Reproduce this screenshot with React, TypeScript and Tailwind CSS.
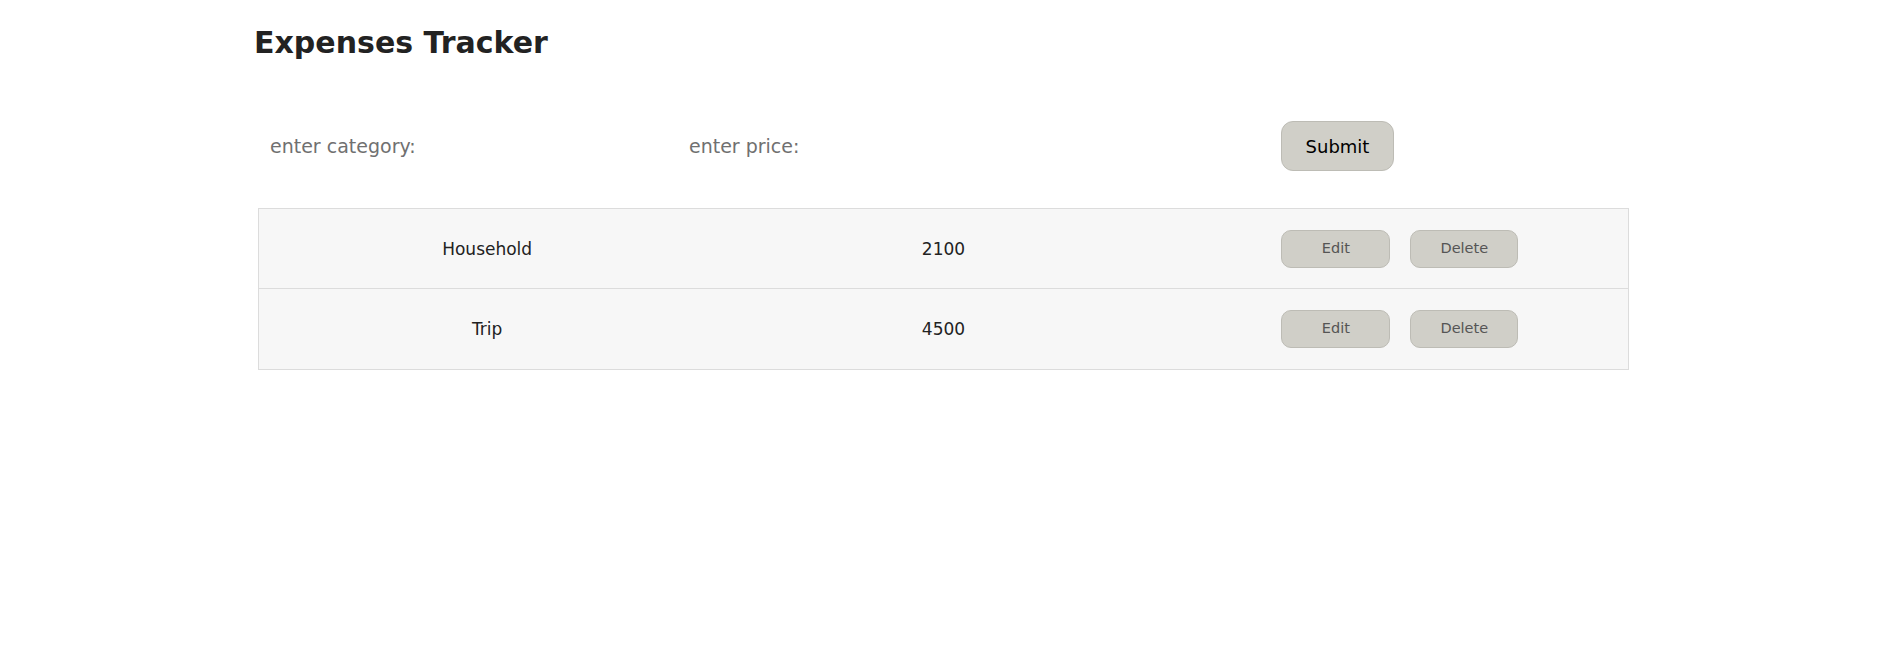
import React from 'react';

const expenses = [
  { category: 'Household', price: 2100 },
  { category: 'Trip', price: 4500 },
];

const font = "font-['DejaVu_Sans',Verdana,sans-serif]";

const App: React.FC = () => (
  <div className={`min-h-screen bg-white ${font}`}>
    <div className="ml-[258px] w-[1371px]">
      <h1 className="-ml-[4px] pt-[24px] text-[30px] leading-[38px] font-bold text-[#222]">Expenses Tracker</h1>

      {/* Form */}
      <div className="mt-[59px] flex items-center h-[50px]">
        <input
          placeholder="enter category:"
          className="w-[419px] px-[12px] h-[40px] text-[19px] bg-transparent outline-none placeholder:text-[#707070]"
        />
        <input
          placeholder="enter price:"
          className="w-[604px] px-[12px] h-[40px] text-[19px] bg-transparent outline-none placeholder:text-[#707070]"
        />
        <button className="w-[113px] h-[50px] rounded-[12px] bg-[#d0cfc8] border border-[#bdbcb5] text-[18px] text-black">
          Submit
        </button>
      </div>

      {/* List */}
      <div className="mt-[37px] border border-[#dcdcdc] divide-y divide-[#dcdcdc]">
        {expenses.map((e, idx) => (
          <div key={idx} className="grid grid-cols-3 h-[80px] items-center bg-[#f7f7f7] text-[17px] text-[#222] text-center">
            <div className="pt-[2px]">{e.category}</div>
            <div className="pt-[2px]">{e.price}</div>
            <div className="flex justify-center gap-[20px]">
              <button className="w-[109px] h-[38px] rounded-[10px] bg-[#d0cfc8] border border-[#bdbcb5] text-[14.5px] text-[#555]">Edit</button>
              <button className="w-[108px] h-[38px] rounded-[10px] bg-[#d0cfc8] border border-[#bdbcb5] text-[14.5px] text-[#555]">Delete</button>
            </div>
          </div>
        ))}
      </div>
    </div>
  </div>
);

export default App;
